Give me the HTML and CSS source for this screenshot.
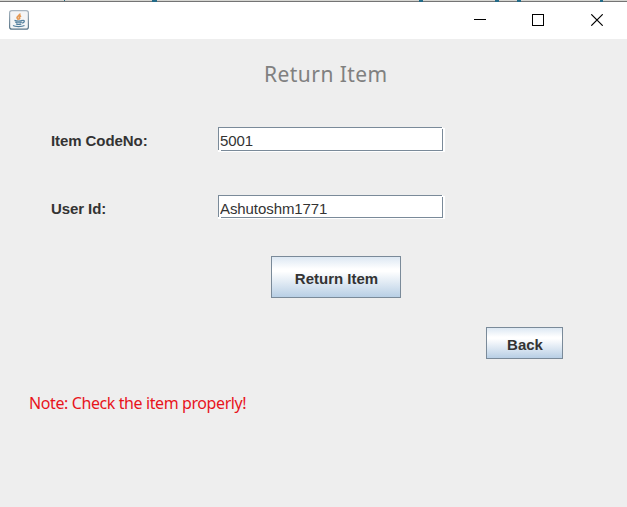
FILE: index.html
```html
<!DOCTYPE html>
<html lang="en">
<head>
<meta charset="utf-8">
<title>Return Item</title>
<link rel="stylesheet" href="styles.css">
</head>
<body>
<svg class="edge" width="627" height="2" shape-rendering="crispEdges">
  <path fill="#d6d6d2" d="M0 0h627v1H0z"/>
  <path fill="#747474" d="M0 1h627v1H0z"/>
  <path fill="#246b88" d="M64 0h1v1h-1zM152 0h5v2h-5zM419 0h4v2h-4zM495 0h4v2h-4zM517 0h4v2h-4zM600 0h3v2h-3z"/>
</svg>
<header class="titlebar">
  <svg class="app-icon" width="20" height="20" viewBox="0 0 20 20" fill="none">
    <defs><linearGradient id="tile" x2="0" y2="1"><stop stop-color="#a8b5c0"/><stop offset="1" stop-color="#587488"/></linearGradient></defs>
    <rect x=".6" y=".6" width="18.8" height="18.5" rx="2.2" fill="#f4f5f6" stroke="url(#tile)" stroke-width="1.2"/>
    <path d="M10.800 3.500c.8 2-3.800 2.700-2.700 4.500.3.700 1 1.100 1.400 1.800M12 5.700c-2 1.300-2.200 2-1 3.500" stroke="#e59a56" stroke-width="1.700"/>
    <path d="M5.500 10.400c2 .8 6 .8 8 0M6.300 12.200c2 .7 4.500.7 6.500 0M7 14c1.800.6 3.800.6 5.400 0M13.400 10.500c2.800-.5 2.400 2-.3 2.700M4 15.500c2 1.400 9 1.400 11.500 0" stroke="#527f9d" stroke-width="1.200"/>
  </svg>
  <svg class="controls" width="129" height="12" viewBox="0 0 129 12" fill="none" stroke="#000">
    <path d="M0 5.500h12M58.500.5h11v11h-11z" shape-rendering="crispEdges"/>
    <path d="M117.300.3l11.400 11.400M128.700.3L117.300 11.700" stroke-width="1.150"/>
  </svg>
</header>
<main class="panel">
  <h1 class="title">Return Item</h1>
  <div class="row first">
    <label class="label code-label" for="code">Item CodeNo:</label>
    <div class="field"><input id="code" class="input code" value="5001"></div>
  </div>
  <div class="row second">
    <label class="label user-label" for="user">User Id:</label>
    <div class="field short"><input id="user" class="input user" value="Ashutoshm1771"></div>
  </div>
  <button class="button return"><span>Return Item</span></button>
  <button class="button back"><span>Back</span></button>
  <p class="note">Note: Check the item properly!</p>
</main>
</body>
</html>
```

FILE: styles.css
```css
* { box-sizing: border-box; }
body {
  margin: 0;
  height: 507px;
  overflow: hidden;
  display: flex;
  flex-direction: column;
  background: #eee;
  color: #333;
  font-family: "Liberation Sans", Arial, sans-serif;
}
.edge { display: block; flex: none; }
.titlebar {
  flex: none;
  height: 37px;
  padding: 0 24px 0 9px;
  display: flex;
  justify-content: space-between;
  background: #fff;
}
.app-icon { margin-top: 8px; }
.controls { margin-top: 12px; }
.panel {
  flex: 1;
  display: flex;
  flex-direction: column;
  align-items: flex-start;
}
.title {
  margin: 20px 0 0 264px;
  height: 30px;
  font: 400 21px/30px "Noto Sans", sans-serif;
  letter-spacing: .45px;
  white-space: nowrap;
  color: #808080;
}
.row {
  display: grid;
  grid-template-columns: 167px 227px;
  margin-left: 51px;
  height: 25px;
}
.first { margin-top: 38px; }
.second { margin-top: 43px; }
.label {
  font-size: 15px;
  font-weight: 700;
  line-height: 27px;
  letter-spacing: -.08px;
  white-space: nowrap;
}
.field {
  width: 227px;
  height: 25px;
  padding: 0 2px 1px 0;
  background:
    linear-gradient(#7a8a99, #7a8a99) 0 0 / 224px 1px no-repeat,
    linear-gradient(#7a8a99, #7a8a99) 0 0 / 1px 23px no-repeat,
    linear-gradient(#7a8a99, #7a8a99) 3px 23px / 222px 1px no-repeat,
    linear-gradient(#7a8a99, #7a8a99) 224px 2px / 1px 22px no-repeat,
    linear-gradient(#eee, #eee) 225px 0 / 2px 1px no-repeat,
    #fff;
}
.field.short {
  height: 24px;
  background-size: 224px 1px, 1px 22px, 222px 1px, 1px 21px, 2px 1px, auto;
  background-position: 0 0, 0 0, 3px 22px, 224px 2px, 225px 0, 0 0;
}
.input {
  display: block;
  width: 220px;
  height: 22px;
  margin: 0 0 0 2px;
  padding: 5px 0 0;
  border: 0;
  outline: 0;
  background: none;
  color: #333;
  font: 15px/17px "Liberation Sans", Arial, sans-serif;
  letter-spacing: -.08px;
}
.button {
  display: flex;
  align-items: center;
  justify-content: center;
  padding: 3px 0 0 1px;
  border: 1px solid #7a8a99;
  border-radius: 0;
  background: linear-gradient(#dde8f3 0%, #fff 30%, #fff 36%, #b8cfe5 100%);
  color: #333;
  font: 700 15px/17px "Liberation Sans", Arial, sans-serif;
}
.return { width: 130px; height: 42px; margin: 36px 0 0 271px; }
.back { width: 77px; height: 32px; margin: 29px 0 0 486px; }
.note {
  margin: 32px 0 0 29px;
  font: 16px/24px "Noto Sans", sans-serif;
  letter-spacing: -.4px;
  white-space: nowrap;
  color: #e8141c;
}
```
